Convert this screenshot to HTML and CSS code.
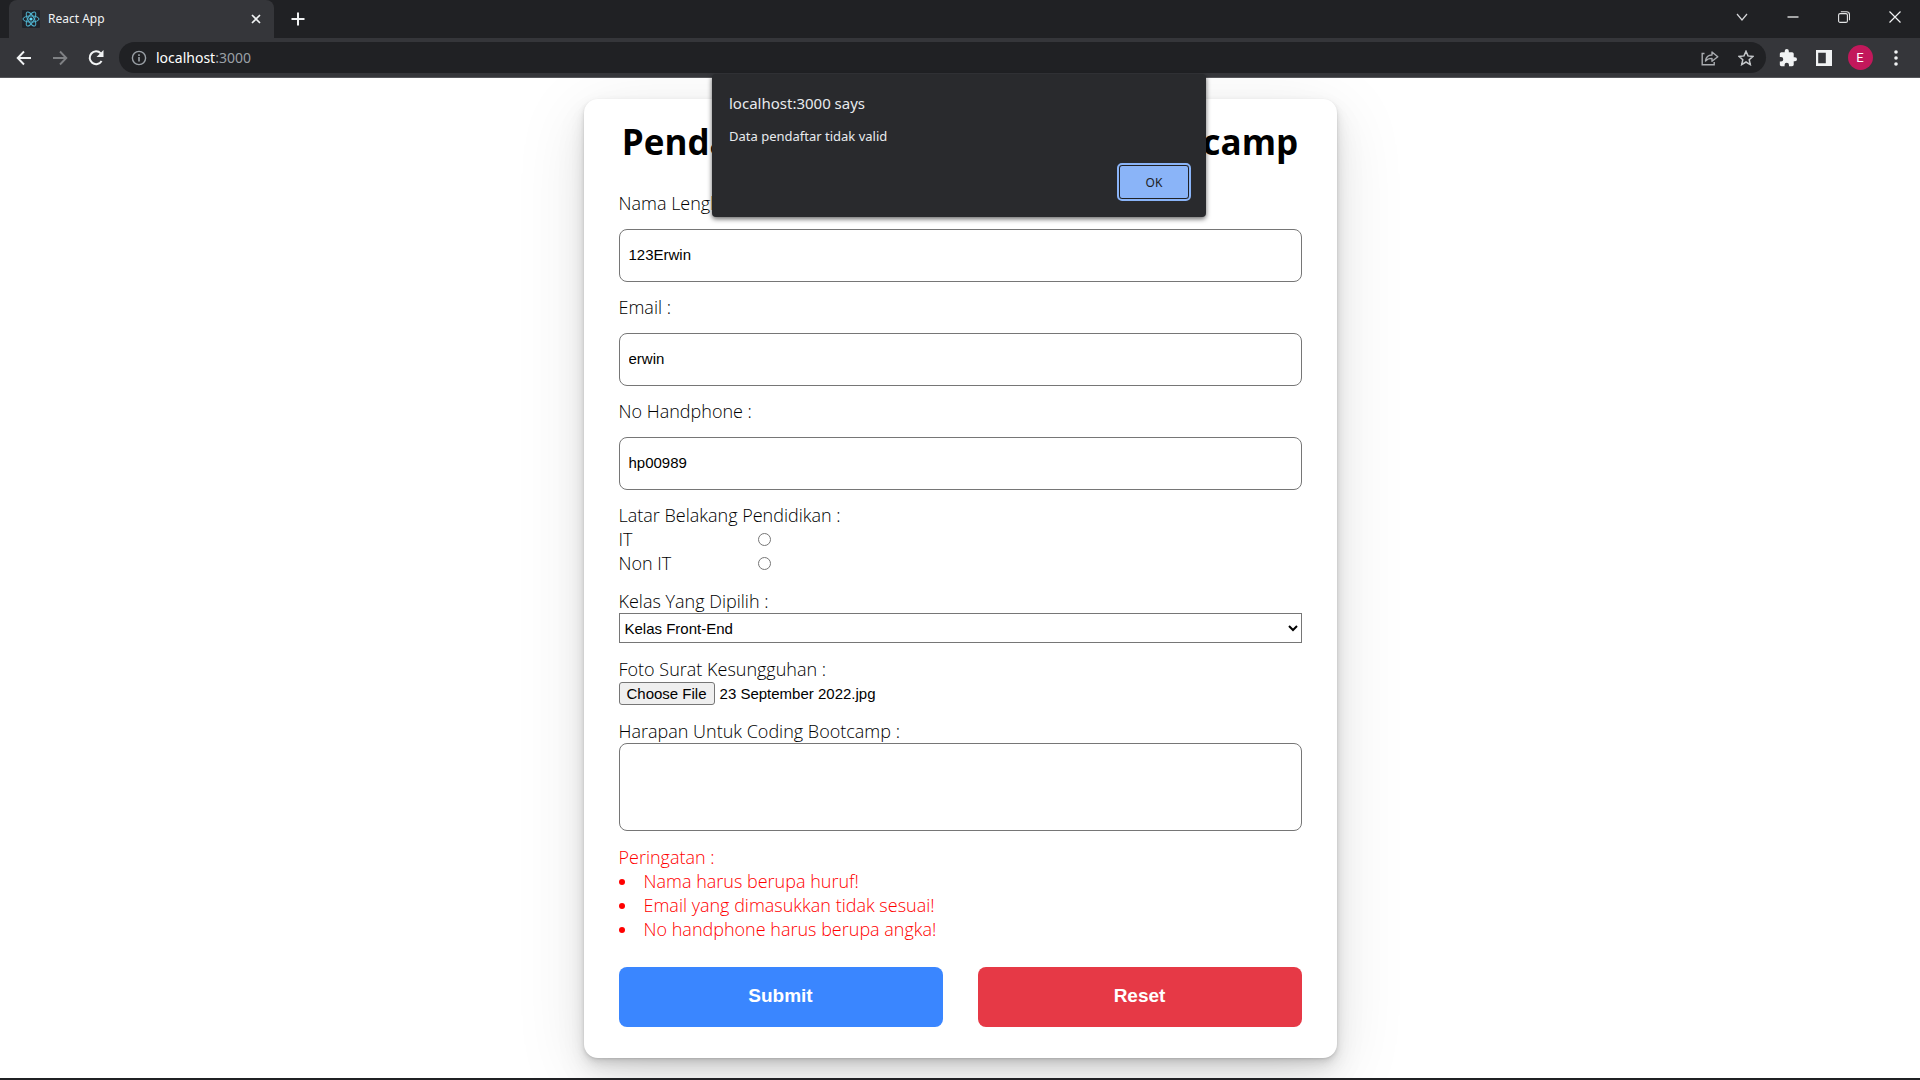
FILE: index.html
```html
<!DOCTYPE html>
<html lang="id">
<head>
<meta charset="utf-8">
<meta name="viewport" content="width=device-width, initial-scale=1">
<title>React App</title>
<link rel="stylesheet" href="styles.css">
</head>
<body>
<header class="browser">
  <div class="tab-strip">
    <div class="tab">
      <svg class="favicon" viewBox="0 0 18 18" aria-hidden="true">
        <rect width="18" height="18" rx="1" fill="#20232a"/>
        <g fill="none" stroke="#4fb3cf" stroke-width="1">
          <ellipse cx="9" cy="9" rx="8" ry="3.1"/>
          <ellipse cx="9" cy="9" rx="8" ry="3.1" transform="rotate(60 9 9)"/>
          <ellipse cx="9" cy="9" rx="8" ry="3.1" transform="rotate(120 9 9)"/>
        </g>
        <circle cx="9" cy="9" r="1.6" fill="#61dafb"/>
      </svg>
      <span class="tab-title">React App</span>
      <button class="icon-btn tab-close" aria-label="Close tab"><svg width="10" height="10" viewBox="0 0 10 10"><path d="M1 1l8 8M9 1l-8 8" stroke="#f1f3f4" stroke-width="1.7"/></svg></button>
    </div>
    <button class="icon-btn new-tab" aria-label="New tab"><svg width="14" height="14" viewBox="0 0 14 14"><path d="M7 0.5v13M0.5 7h13" stroke="#f1f3f4" stroke-width="2"/></svg></button>
    <div class="window-controls">
      <button class="icon-btn" aria-label="Search tabs"><svg width="12" height="8" viewBox="0 0 12 8"><path d="M1 1l5 6 5-6" fill="none" stroke="#d5d6d8" stroke-width="1.2"/></svg></button>
      <button class="icon-btn" aria-label="Minimize"><svg width="12" height="2" viewBox="0 0 12 2"><path d="M0.500 1h11" stroke="#fff" stroke-width="1.2"/></svg></button>
      <button class="icon-btn" aria-label="Restore"><svg width="12" height="12" viewBox="0 0 12 12" fill="none" stroke="#e4e5e6" stroke-width="1.1"><rect x="0.600" y="2.600" width="8.800" height="8.800" rx="1.500"/><path d="M2.800 0.700h5.700a3 3 0 0 1 3 3v5.500"/></svg></button>
      <button class="icon-btn" aria-label="Close"><svg width="12" height="12" viewBox="0 0 12 12"><path d="M0.500 0.500l11 11M11.500 0.500l-11 11" stroke="#f1f3f4" stroke-width="1.2"/></svg></button>
    </div>
  </div>
  <div class="toolbar">
    <button class="icon-btn tool" aria-label="Back"><svg width="16" height="16" viewBox="0 0 16 16" fill="none" stroke="#f1f3f4" stroke-width="1.9"><path d="M15 8H2M8 1.500L1.700 8 8 14.500"/></svg></button>
    <button class="icon-btn tool" aria-label="Forward"><svg width="16" height="16" viewBox="0 0 16 16" fill="none" stroke="#7f8184" stroke-width="1.9"><path d="M1 8h13M8 1.500L14.300 8 8 14.500"/></svg></button>
    <button class="icon-btn tool" aria-label="Reload"><svg width="16" height="16" viewBox="0 0 16 16"><path d="M13.600 11a6.400 6.400 0 1 1-.8-7.600" fill="none" stroke="#f1f3f4" stroke-width="2"/><path d="M15.500 0v7h-7z" fill="#f1f3f4"/></svg></button>
    <div class="omnibox">
      <svg width="16" height="16" viewBox="0 0 16 16" fill="none" stroke="#9aa0a6" aria-hidden="true"><circle cx="8" cy="8" r="6.600" stroke-width="1.400"/><path d="M8 7v4.600M8 4.200v1.700" stroke-width="1.600"/></svg>
      <span class="url">localhost<span class="port">:3000</span></span>
      <button class="icon-btn tool" aria-label="Share"><svg width="18" height="16" viewBox="0 0 18 16" fill="none" stroke="#a9acb0" stroke-width="1.400"><path d="M3.500 3.500H1.200v11.300h12V12"/><path d="M4.500 11c.5-4 3-6 6.500-6V2l5.800 4.800L11 11.300V8.400C8 8.400 6 9.200 4.500 11z" stroke-linejoin="round"/></svg></button>
      <button class="icon-btn tool" aria-label="Bookmark"><svg width="16" height="16" viewBox="0 0 16 16"><path d="M8 1.300l2 4.600 5 .5-3.800 3.300 1.100 4.900L8 12l-4.300 2.600 1.100-4.900L1 6.400l5-.5z" fill="none" stroke="#c4c7ca" stroke-width="1.500"/></svg></button>
    </div>
    <button class="icon-btn tool" aria-label="Extensions"><svg width="18" height="18" viewBox="1 1 22 22" fill="#f1f3f4"><path d="M20.500 11H19V7c0-1.100-.9-2-2-2h-4V3.500a2.500 2.500 0 0 0-5 0V5H4c-1.100 0-2 .9-2 2v3.800h1.500a2.700 2.700 0 0 1 0 5.400H2V20c0 1.100.9 2 2 2h3.800v-1.500a2.700 2.700 0 0 1 5.400 0V22H17c1.100 0 2-.9 2-2v-4h1.500a2.500 2.500 0 0 0 0-5z"/></svg></button>
    <button class="icon-btn tool" aria-label="Side panel"><svg width="16" height="16" viewBox="0 0 16 16"><path fill="#f1f3f4" fill-rule="evenodd" d="M0 0h16v16H0zM2.200 2.800v10.400h7.600V2.800z"/></svg></button>
    <button class="icon-btn tool" aria-label="Profile"><span class="avatar">E</span></button>
    <button class="icon-btn tool" aria-label="Menu"><svg width="4" height="16" viewBox="0 0 4 16" fill="#f1f3f4"><circle cx="2" cy="2" r="1.800"/><circle cx="2" cy="8" r="1.800"/><circle cx="2" cy="14" r="1.800"/></svg></button>
  </div>
</header>

<main class="page">
  <form class="card">
    <h1 class="title">Pendaftaran Peserta Coding Bootcamp</h1>

    <div class="field">
      <label for="nama">Nama Lengkap :</label>
      <input class="text-input" id="nama" type="text" value="123Erwin">
    </div>
    <div class="field">
      <label for="email">Email :</label>
      <input class="text-input" id="email" type="text" value="erwin">
    </div>
    <div class="field">
      <label for="hp">No Handphone :</label>
      <input class="text-input" id="hp" type="text" value="hp00989">
    </div>

    <fieldset class="group">
      <legend>Latar Belakang Pendidikan :</legend>
      <div class="radio-row"><label for="it">IT</label><input id="it" type="radio" name="latar"></div>
      <div class="radio-row"><label for="non-it">Non IT</label><input id="non-it" type="radio" name="latar"></div>
    </fieldset>

    <div class="group">
      <label for="kelas">Kelas Yang Dipilih :</label>
      <select class="select" id="kelas"><option>Kelas Front-End</option></select>
    </div>

    <div class="group">
      <label for="foto">Foto Surat Kesungguhan :</label>
      <div class="file">
        <input class="visually-hidden" id="foto" type="file" tabindex="-1">
        <button class="file-btn" type="button">Choose File</button>
        <span class="file-name">23 September 2022.jpg</span>
      </div>
    </div>

    <div class="group">
      <label for="harapan">Harapan Untuk Coding Bootcamp :</label>
      <textarea class="textarea" id="harapan"></textarea>
    </div>

    <div class="warning">
      <p>Peringatan :</p>
      <ul>
        <li>Nama harus berupa huruf!</li>
        <li>Email yang dimasukkan tidak sesuai!</li>
        <li>No handphone harus berupa angka!</li>
      </ul>
    </div>

    <div class="actions">
      <button class="btn submit" type="submit">Submit</button>
      <button class="btn reset" type="reset">Reset</button>
    </div>
  </form>
</main>
<footer class="taskbar-edge"></footer>

<div class="alert" role="alertdialog" aria-labelledby="alert-title" aria-describedby="alert-text">
  <h2 class="alert-title" id="alert-title">localhost:3000 says</h2>
  <p class="alert-text" id="alert-text">Data pendaftar tidak valid</p>
  <button class="alert-ok" type="button">OK</button>
</div>
</body>
</html>
```
FILE: styles.css
```css
* { box-sizing: border-box; }

body {
  margin: 0;
  min-height: 100vh;
  display: flex;
  flex-direction: column;
  position: relative;
  background: #fff;
  color: #000;
  font: 300 18px/24px "Open Sans", sans-serif;
}

h1, h2, p, ul { margin: 0; }

/* Browser frame */
.browser {
  font-family: "Noto Sans", "Open Sans", sans-serif;
  font-weight: 400;
  background: #202124;
}

.icon-btn {
  display: flex;
  align-items: center;
  justify-content: center;
  padding: 0;
  border: 0;
  background: none;
}

.tab-strip { display: flex; height: 38px; padding-left: 9px; }

.tab {
  display: flex;
  align-items: center;
  gap: 8px;
  width: 265px;
  padding: 0 10px 0 13px;
  border-radius: 8px 8px 0 0;
  background: #35363a;
  color: #f1f3f4;
  font-size: 12px;
}

.favicon { width: 18px; height: 18px; }
.tab-title { flex: 1; }
.tab-close { width: 16px; height: 16px; }
.new-tab { width: 48px; }

.window-controls { display: flex; height: 34px; margin-left: auto; }
.window-controls .icon-btn { width: 51px; }

.toolbar {
  display: flex;
  align-items: center;
  height: 40px;
  padding: 0 6px;
  background: #35363a;
  border-bottom: 1px solid #55565a;
}

.tool { width: 36px; height: 32px; }

.omnibox {
  display: flex;
  align-items: center;
  flex: 1;
  height: 31px;
  margin: 0 4px 0 5px;
  padding: 0 2px 0 12px;
  border-radius: 16px;
  background: #202124;
}

.url { flex: 1; margin-left: 9px; color: #fff; font-size: 14px; }
.port { color: #9aa0a6; }

.avatar {
  width: 25px;
  height: 25px;
  border-radius: 50%;
  background: #c2185b;
  color: #fff;
  font: 400 13px/25px Roboto, sans-serif;
}

/* Registration page */
.page {
  flex: 1;
  display: flex;
  justify-content: center;
  align-items: flex-start;
  padding: 21px 16px 20px;
  overflow: hidden;
}

.card {
  width: 100%;
  max-width: 753px;
  padding: 19px 35px 31px;
  border-radius: 14px;
  background: #fff;
  box-shadow:
    0 1px 2px rgba(0, 0, 0, .07),
    0 2px 4px rgba(0, 0, 0, .07),
    0 4px 8px rgba(0, 0, 0, .07),
    0 8px 16px rgba(0, 0, 0, .07),
    0 16px 32px rgba(0, 0, 0, .07),
    0 16px 72px rgba(0, 0, 0, .1);
}

.title {
  margin-bottom: 25px;
  font-size: 35px;
  font-weight: 700;
  line-height: 48px;
  text-align: center;
}

.field {
  display: flex;
  flex-direction: column;
  gap: 14px;
  margin-bottom: 13px;
}

.text-input,
.textarea {
  width: 100%;
  border: 1px solid #767676;
  border-radius: 8px;
  background: #fff;
  color: #000;
  font: 400 15px "Liberation Sans", Arial, sans-serif;
}

.text-input { height: 53px; padding: 0 9px 2px; }
.textarea { display: block; height: 88px; padding: 9px; resize: none; }

.group {
  margin: 0 0 14px;
  padding: 0;
  border: 0;
  min-width: 0;
}

.group label { display: block; }
legend { padding: 0; }

.radio-row { display: flex; align-items: center; }
.radio-row label { width: 139px; }
.radio-row input { width: 13px; height: 13px; margin: 0; }

.select {
  display: block;
  width: 100%;
  height: 30px;
  padding: 0 1px;
  border: 1px solid #767676;
  border-radius: 0;
  background: #fff;
  color: #000;
  font: 400 15px "Liberation Sans", Arial, sans-serif;
}

.file {
  display: flex;
  align-items: center;
  gap: 5px;
  position: relative;
  height: 24px;
  font: 400 15px "Liberation Sans", Arial, sans-serif;
}

.file-btn {
  height: 23px;
  padding: 0 7px;
  border: 1px solid #767676;
  border-radius: 3px;
  background: #efefef;
  color: #000;
  font: inherit;
}

.visually-hidden {
  position: absolute;
  width: 1px;
  height: 1px;
  overflow: hidden;
  opacity: 0;
}

.warning { color: #f00; }
.warning ul { padding: 0; list-style-position: inside; }

.actions { display: flex; gap: 35px; margin-top: 26px; }

.btn {
  flex: 1;
  height: 60px;
  padding: 0 0 2px;
  border: 0;
  border-radius: 8px;
  color: #fff;
  font: 700 19px "Liberation Sans", Arial, sans-serif;
}

.submit { background: #3a86ff; }
.reset { background: #e63946; }

.taskbar-edge { height: 2px; background: #202124; }

/* Browser alert, hanging over the page from the toolbar */
.alert {
  position: absolute;
  top: 74px;
  left: 50%;
  width: 494px;
  margin-left: -248px;
  display: flex;
  flex-direction: column;
  padding: 17px 16px 17px 17px;
  border-radius: 4px;
  background: #292a2d;
  color: #e8eaed;
  box-shadow: 0 2px 5px rgba(0, 0, 0, .6);
  font-family: "Noto Sans", "Open Sans", sans-serif;
  font-weight: 400;
}

.alert-title { font-size: 15px; font-weight: 400; line-height: 24px; }
.alert-text { margin: 11px 0 18px; font-size: 13px; line-height: 20px; }

.alert-ok {
  align-self: flex-end;
  width: 70px;
  height: 34px;
  margin: 1px;
  border: 1px solid #202124;
  border-radius: 3px;
  outline: 2px solid #8ab4f8;
  background: #8ab4f8;
  color: #202124;
  font: 400 12px "Noto Sans", "Open Sans", sans-serif;
}
```
